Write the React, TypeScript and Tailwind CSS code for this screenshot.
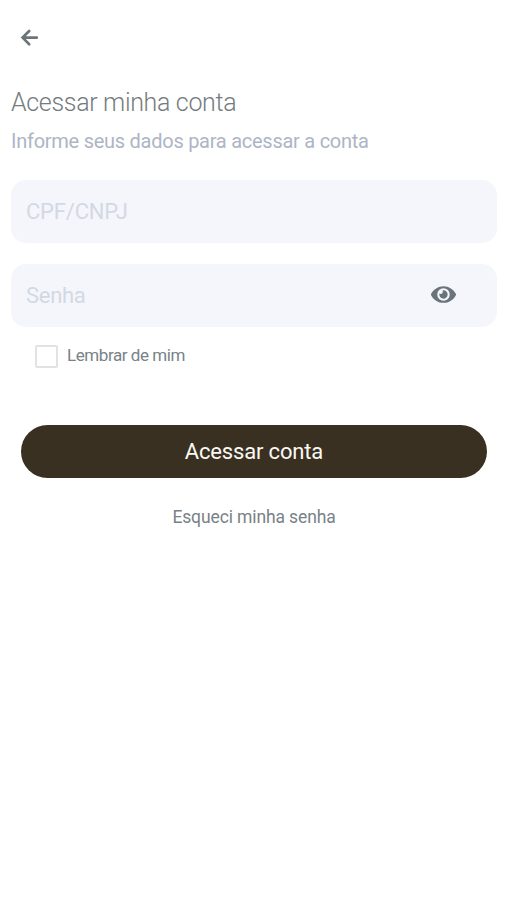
import { FaEye } from "react-icons/fa";

function BackArrow() {
  return (
    <svg viewBox="0 0 20 20" className="size-[20px]" fill="none" stroke="#6b7579" strokeWidth="2.7" strokeLinecap="round" strokeLinejoin="miter">
      <path d="M9.2 3 2.6 9.6l6.6 6.6M3.2 9.6h13.6" />
    </svg>
  );
}

export default function App() {
  return (
    <main className="h-[900px] w-full bg-white font-['Roboto',sans-serif] text-[#788287]">
      <header className="flex h-[75px] items-center pl-[20px]">
        <button aria-label="Voltar"><BackArrow /></button>
      </header>
      <section className="pl-[11px] pr-[10px]">
        <h1 className="mt-[12px] h-[32px] text-[25px] font-light leading-[32px] tracking-[-0.33px] whitespace-nowrap text-[#747b7e]"><span>Acessar minha conta</span></h1>
        <p className="mt-[8px] h-[28px] text-[20px] leading-[28px] tracking-[-0.26px] text-[#adb5c5] whitespace-nowrap"><span>Informe seus dados para acessar a conta</span></p>
        <div className="mt-[25px] flex h-[63px] items-center rounded-[15px] bg-[#f4f6fb] px-[15px] text-[22px] tracking-[-0.2px] text-[#d3d9e3]"><span>CPF/CNPJ</span></div>
        <div className="mt-[21px] flex h-[63px] items-center justify-between rounded-[15px] bg-[#f4f6fb] pl-[15px] pr-[41px] text-[22px] tracking-[-0.3px] text-[#d3d9e3]"><span>Senha</span><FaEye className="mb-[2px] h-[25px] w-[25px] text-[#69757a]" /></div>
        <label className="mt-[17px] flex h-[24px] items-center pl-[24px] text-[17px] tracking-[-0.43px]"><i className="mr-[9px] size-[23px] rounded-[2px] border-2 border-[#e1e2e3]" /><span>Lembrar de mim</span></label>
        <button className="mt-[57px] ml-[10px] flex h-[53px] w-[466px] items-center justify-center rounded-full bg-[#393022] text-[22px] tracking-[-0.17px] text-[#faf8f3]"><span>Acessar conta</span></button>
        <div className="mt-[27px] text-center text-[17.5px] leading-[24px] tracking-[-0.12px]"><span>Esqueci minha senha</span></div>
      </section>
    </main>
  );
}
